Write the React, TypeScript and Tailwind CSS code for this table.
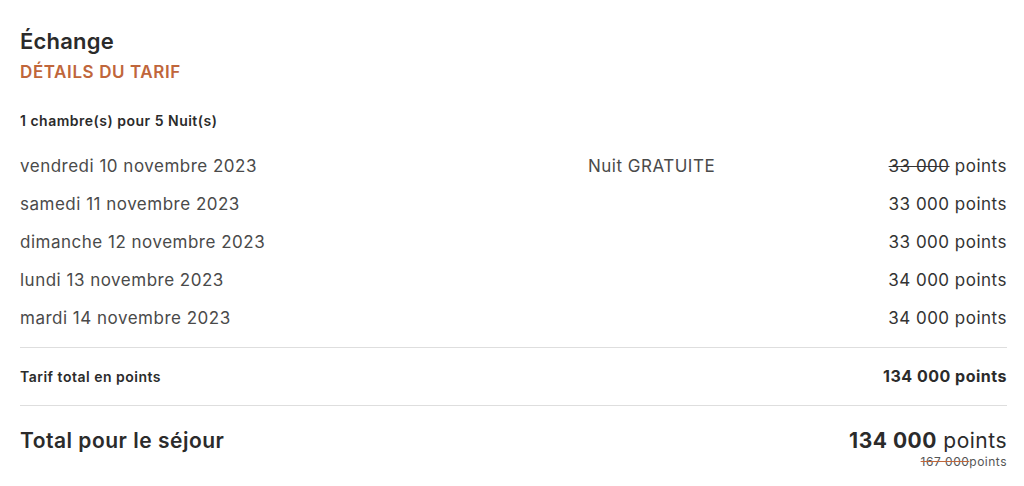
const nights = [
  { date: 'vendredi 10 novembre 2023', note: 'Nuit GRATUITE', points: '33 000', free: true },
  { date: 'samedi 11 novembre 2023', note: '', points: '33 000', free: false },
  { date: 'dimanche 12 novembre 2023', note: '', points: '33 000', free: false },
  { date: 'lundi 13 novembre 2023', note: '', points: '34 000', free: false },
  { date: 'mardi 14 novembre 2023', note: '', points: '34 000', free: false },
];

export default function App() {
  return (
    <div className="min-h-screen bg-white font-['Inter',sans-serif] tracking-[0.5px] text-[#333]">
      <div className="pl-5 pr-[17px] pt-[26px]">
        {/* Header */}
        <h1 className="text-[22px] font-semibold leading-[30px] tracking-[0.2px] text-[#2b2b2b]">Échange</h1>
        <h2 className="mt-[6px] text-[17px] font-semibold uppercase leading-[20px] tracking-[0.6px] text-[#c0663b]">
          Détails du tarif
        </h2>

        <p className="mt-[29px] text-[14px] font-semibold leading-[20px] text-[#2b2b2b]">
          1 chambre(s) pour 5 Nuit(s)
        </p>

        {/* Nights */}
        <div className="mt-[17px] pb-[9px]">
          {nights.map((n) => (
            <div key={n.date} className="grid h-[38px] grid-cols-[568px_1fr_auto] items-center text-[17px] text-[#4a4a4a]">
              <span>{n.date}</span>
              <span>{n.note}</span>
              <span className="text-[#333]">
                <span className={n.free ? 'line-through' : ''}>{n.points}</span> points
              </span>
            </div>
          ))}
        </div>

        {/* Total points */}
        <div className="flex h-[58px] items-center justify-between border-t border-[#dedede] pb-[1px]">
          <span className="text-[14px] font-semibold text-[#2b2b2b]">Tarif total en points</span>
          <span className="text-[16px] font-bold text-[#2b2b2b]">134 000 points</span>
        </div>

        {/* Stay total */}
        <div className="flex justify-between border-t border-[#dedede] pt-[20px]">
          <span className="text-[21px] font-semibold leading-[30px] text-[#2b2b2b]">Total pour le séjour</span>
          <div className="flex flex-col items-end">
            <span className="text-[21px] leading-[30px] text-[#2b2b2b]">
              <span className="font-bold">134 000</span> points
            </span>
            <span className="text-[12px] leading-[12px] text-[#555]">
              <span className="line-through decoration-[#c0663b]">167 000</span>points
            </span>
          </div>
        </div>
      </div>
    </div>
  );
}
